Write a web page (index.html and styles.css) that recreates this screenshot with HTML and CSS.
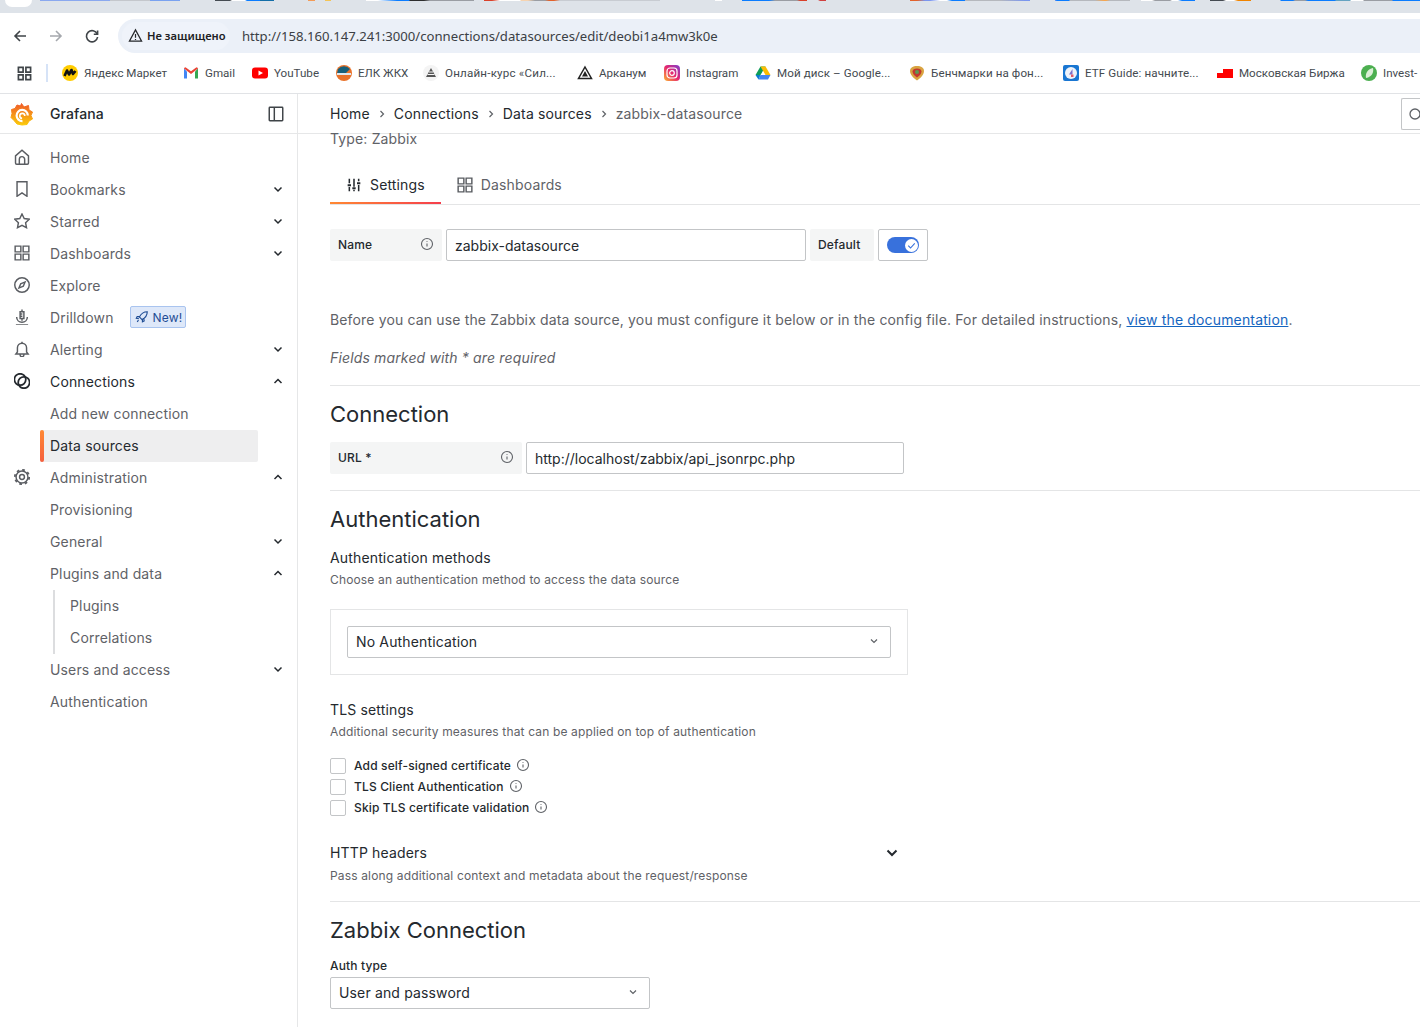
FILE: index.html
```html
<!DOCTYPE html>
<html lang="en">
<head>
<meta charset="utf-8">
<title>zabbix-datasource - Grafana</title>
<link rel="stylesheet" href="styles.css">
</head>
<body>
<div class="tabstrip"><span class="tab-stub"></span></div>
<div class="toolbar">
  <svg class="nav-ic" viewBox="0 0 16 16"><path d="M14 8H3M8 3L3 8l5 5"/></svg>
  <svg class="nav-ic nav-off" viewBox="0 0 16 16"><path d="M2 8h11M8 3l5 5-5 5"/></svg>
  <svg class="nav-ic" viewBox="0 0 16 16"><path d="M13.2 6A5.6 5.6 0 1 0 13.6 9"/><path d="M13.6 2.400V6.200H9.800"/></svg>
  <div class="omnibox">
    <div class="chip">
      <svg class="warn" viewBox="0 0 16 16"><path d="M8 2L1.500 14h13z"/><path d="M8 6.500v4M8 11.600v1.200"/></svg>
      <span>Не защищено</span>
    </div>
    <span class="url">http://158.160.147.241:3000/connections/datasources/edit/deobi1a4mw3k0e</span>
  </div>
</div>
<div class="bookmarks">
  <svg class="bm-apps" viewBox="0 0 16 16"><path d="M1.500 1.500h5v5h-5zM9.500 1.500h5v5h-5zM1.500 9.500h5v5h-5zM9.500 9.500h5v5h-5z"/></svg>
  <span class="bm-sep"></span>
  <div class="bm">
    <svg viewBox="0 0 16 16"><circle cx="8" cy="8" r="8" fill="#fc0"/><path d="M2.500 11L5 5.500 7 9.500 9.500 5 11 9l2.500-3" fill="none" stroke="#111" stroke-width="2.600" stroke-linejoin="round"/></svg>
    <span class="bm-t w-yandex">Яндекс Маркет</span>
  </div>
  <div class="bm">
    <svg viewBox="0 0 16 16"><path d="M1 3.500v10h3V6.500z" fill="#4285f4"/><path d="M15 3.500v10h-3V6.500z" fill="#34a853"/><path d="M1 3.500L8 9l7-5.500V3l-1.500-.8L8 6.200 2.500 2.200 1 3z" fill="#ea4335"/></svg>
    <span class="bm-t w-gmail">Gmail</span>
  </div>
  <div class="bm">
    <svg viewBox="0 0 16 16"><rect y="2.500" width="16" height="11" rx="3" fill="#f00"/><path d="M6.500 5.500L11 8l-4.500 2.500z" fill="#fff"/></svg>
    <span class="bm-t w-yt">YouTube</span>
  </div>
  <div class="bm">
    <svg viewBox="0 0 16 16"><circle cx="8" cy="8" r="8" fill="#e9722a"/><path d="M2 4a8 8 0 0 1 12 0L9 9H1z" fill="#17607a"/><path d="M1 9h14" stroke="#dfe8ee" stroke-width="2"/></svg>
    <span class="bm-t w-elk">ЕЛК ЖКХ</span>
  </div>
  <div class="bm gap-21">
    <svg viewBox="0 0 16 16"><circle cx="8" cy="8" r="8" fill="#f4f4f4"/><path d="M8 3l5 9H3z" fill="#555"/><path d="M4.500 9.500h7M6 7h4" stroke="#f4f4f4"/></svg>
    <span class="bm-t w-trunc">Онлайн-курс «Сил...</span>
  </div>
  <div class="bm gap-17">
    <svg viewBox="0 0 16 16"><path d="M8 2l6.500 11.500h-13z" fill="none" stroke="#222" stroke-width="1.500"/><path d="M8 6l3 5.500H5z" fill="#222"/></svg>
    <span class="bm-t w-ark">Арканум</span>
  </div>
  <div class="bm">
    <svg viewBox="0 0 16 16"><defs><linearGradient id="ig" x1="0" y1="1" x2="1" y2="0"><stop offset="0" stop-color="#fdb52e"/><stop offset=".5" stop-color="#e6276f"/><stop offset="1" stop-color="#7a3fd0"/></linearGradient></defs><rect width="16" height="16" rx="4" fill="url(#ig)"/><rect x="3" y="3" width="10" height="10" rx="3" fill="none" stroke="#fff" stroke-width="1.200"/><circle cx="8" cy="8" r="2.300" fill="none" stroke="#fff" stroke-width="1.200"/></svg>
    <span class="bm-t w-insta">Instagram</span>
  </div>
  <div class="bm gap-19">
    <svg viewBox="0 0 16 16"><path d="M5.500 1.500h5L5.500 10H.5z" fill="#0f9d58"/><path d="M10.500 1.500L15.500 10h-5L5.500 1.500z" fill="#fbbc04"/><path d="M3.500 14.500L5.500 10h10l-2.500 4.500z" fill="#4285f4"/><path d="M.5 10h5l-2 4.500z" fill="#0a7bd0"/></svg>
    <span class="bm-t w-trunc-b">Мой диск – Google...</span>
  </div>
  <div class="bm gap-20">
    <svg viewBox="0 0 16 16"><path d="M8 1C12 1 15 2.500 15 6c0 4-3.500 7-7 9.500C4.500 13 1 10 1 6 1 2.500 4 1 8 1z" fill="#d9a441"/><path d="M8 3.500c2.500 0 4.500 1 4.500 3 0 2.500-2.500 4.500-4.500 6-2-1.500-4.500-3.500-4.500-6 0-2 2-3 4.500-3z" fill="#c2382f"/><circle cx="8" cy="7" r="2" fill="#5d9b52"/></svg>
    <span class="bm-t w-trunc-c">Бенчмарки на фон...</span>
  </div>
  <div class="bm gap-20">
    <svg viewBox="0 0 16 16"><rect width="16" height="16" rx="2" fill="#1976d2"/><circle cx="8" cy="8" r="6" fill="#eef3fa"/><path d="M9.500 4L6 9.500h3.500z" fill="#7d6fc9"/><path d="M8 9.500h2.500V12H8z" fill="#e05a6a"/></svg>
    <span class="bm-t w-trunc-c">ETF Guide: начните...</span>
  </div>
  <div class="bm">
    <svg viewBox="0 0 16 16"><path d="M0 13V8h6V4h10v9z" fill="#f00"/></svg>
    <span class="bm-t w-moex">Московская Биржа</span>
  </div>
  <div class="bm">
    <svg viewBox="0 0 16 16"><circle cx="8" cy="8" r="8" fill="#4caf50"/><path d="M5 13C4 8 7 4 12 3c1 4-1 9-7 10z" fill="#dcefd8"/></svg>
    <span class="bm-t">Invest-</span>
  </div>
</div>

<div class="app">
  <aside class="sidebar">
    <div class="side-head">
      <svg class="logo" viewBox="0 0 24 24"><defs><linearGradient id="gf" x1="0" y1="1" x2="0" y2="0"><stop offset="0" stop-color="#fbca0a"/><stop offset="1" stop-color="#f05a28"/></linearGradient></defs><path d="M11.500 1.500L14 5l4.500-1.500.5 4.500 3.500 2-1.500 3.500 1.500 3.500-3.500 2-2 3.500-5 .5-5-1-3-3.500-3-3 1-4-.5-4 3.500-1L7 3l3.500 1z" fill="url(#gf)" stroke="url(#gf)" stroke-linejoin="round"/><path d="M17.800 13.500a5.600 5.600 0 1 0-5.300 5.600" fill="none" stroke="#fff" stroke-width="2.200"/><path d="M14.800 14a2.500 2.500 0 1 0-2.700 2.400" fill="none" stroke="#fff" stroke-width="1.600"/></svg>
      <span class="brand">Grafana</span>
      <svg class="dock" viewBox="0 0 16 16"><rect x="2" y="2" width="12" height="12" rx=".6"/><path d="M6.500 2v12"/></svg>
    </div>
    <nav class="nav">
      <a class="row"><svg class="ic" viewBox="1.500 1.500 21 21"><path d="M3.500 10.500L12 3l8.500 7.500V20a1.500 1.500 0 0 1-1.500 1.500H5A1.500 1.500 0 0 1 3.500 20z"/><path d="M8.500 21.500V15a3.500 3.500 0 0 1 7 0v6.500"/></svg><span>Home</span></a>
      <a class="row"><svg class="ic" viewBox="1.500 1.500 21 21"><path d="M5.500 2.500h13v19L12 17l-6.500 4.500z"/></svg><span>Bookmarks</span><svg class="chev" viewBox="0 0 16 16"><path d="M4.500 6.500L8 10l3.500-3.500"/></svg></a>
      <a class="row"><svg class="ic" viewBox="1.500 1.500 21 21"><path d="M12 2.800l2.900 6 6.600.9-4.800 4.600 1.200 6.500L12 17.700l-5.900 3.100 1.200-6.500-4.800-4.600 6.600-.9z"/></svg><span>Starred</span><svg class="chev" viewBox="0 0 16 16"><path d="M4.500 6.500L8 10l3.500-3.500"/></svg></a>
      <a class="row"><svg class="ic" viewBox="1.500 1.500 21 21"><path d="M3 3h7.500v7.500H3zM13.500 3H21v7.500h-7.500zM3 13.500h7.500V21H3zM13.500 13.500H21V21h-7.500z"/></svg><span>Dashboards</span><svg class="chev" viewBox="0 0 16 16"><path d="M4.500 6.500L8 10l3.500-3.500"/></svg></a>
      <a class="row"><svg class="ic" viewBox="1.500 1.500 21 21"><circle cx="12" cy="12" r="9.500"/><path d="M16 8l-2.300 5.700L8 16l2.300-5.700z"/></svg><span>Explore</span></a>
      <a class="row"><svg class="ic" viewBox="1.500 1.500 21 21"><path d="M12 2v3M9.500 5h5v9h-5zM9.500 8h3M9.500 11h3M12 14v3"/><path d="M5 12c0 4 3 7 7 7s7-3 7-7"/><path d="M4 22.500h16"/></svg><span>Drilldown</span>
        <span class="badge"><svg class="rocket" viewBox="0 0 16 16"><path d="M14 2c-4 0-7 2-9 6l3 3c4-2 6-5 6-9z"/><path d="M5.500 7.500H2.500l-1 2 3 .5M8.500 10.500v3l2-1-.5-3M4 11.500L2.500 13.500"/></svg>New!</span></a>
      <a class="row"><svg class="ic" viewBox="1.500 1.500 21 21"><path d="M6 16V10.500a6 6 0 0 1 12 0V16l2 2.500H4z"/><path d="M9.500 18.500v1a2.500 2.500 0 0 0 5 0v-1M12 2.500v2"/></svg><span>Alerting</span><svg class="chev" viewBox="0 0 16 16"><path d="M4.500 6.500L8 10l3.500-3.500"/></svg></a>
      <a class="row row-on"><svg class="ic ic-on" viewBox="1.500 1.500 21 21"><circle cx="9.500" cy="10" r="7.500"/><circle cx="14.500" cy="14" r="7.500"/></svg><span>Connections</span><svg class="chev" viewBox="0 0 16 16"><path d="M4.500 10L8 6.500l3.500 3.500"/></svg></a>
      <a class="row row-sub"><span>Add new connection</span></a>
      <a class="row row-sub row-active"><span>Data sources</span></a>
      <a class="row"><svg class="ic" viewBox="1.500 1.500 21 21"><circle cx="12" cy="12" r="3.200"/><circle cx="12" cy="12" r="7.800"/><circle class="teeth" cx="12" cy="12" r="9.400"/></svg><span>Administration</span><svg class="chev" viewBox="0 0 16 16"><path d="M4.500 10L8 6.500l3.500 3.500"/></svg></a>
      <a class="row row-sub"><span>Provisioning</span></a>
      <a class="row row-sub"><span>General</span><svg class="chev" viewBox="0 0 16 16"><path d="M4.500 6.500L8 10l3.500-3.500"/></svg></a>
      <a class="row row-sub"><span>Plugins and data</span><svg class="chev" viewBox="0 0 16 16"><path d="M4.500 10L8 6.500l3.500 3.500"/></svg></a>
      <div class="subtree">
        <a class="row row-leaf"><span>Plugins</span></a>
        <a class="row row-leaf"><span>Correlations</span></a>
      </div>
      <a class="row row-sub"><span>Users and access</span><svg class="chev" viewBox="0 0 16 16"><path d="M4.500 6.500L8 10l3.500-3.500"/></svg></a>
      <a class="row row-sub"><span>Authentication</span></a>
    </nav>
  </aside>

  <div class="main">
    <header class="crumbs">
      <span class="crumb">Home</span><svg class="sep" viewBox="0 0 10 16"><path d="M3.500 5L6.500 8l-3 3"/></svg>
      <span class="crumb">Connections</span><svg class="sep" viewBox="0 0 10 16"><path d="M3.500 5L6.500 8l-3 3"/></svg>
      <span class="crumb">Data sources</span><svg class="sep" viewBox="0 0 10 16"><path d="M3.500 5L6.500 8l-3 3"/></svg>
      <span class="crumb crumb-last">zabbix-datasource</span>
      <div class="searchbox"><svg viewBox="0 0 16 16"><circle cx="11" cy="8" r="5"/></svg></div>
    </header>
    <div class="content">
      <div class="type-line">Type: Zabbix</div>
      <div class="tabs">
        <div class="tab tab-on"><svg class="ic ic-on" viewBox="0 0 24 24"><path d="M5 2.500v7M5 15v6.500M12 2.500v12M12 19v2.500M19 2.500v4M19 12v9.500"/><path d="M2.500 12.500h5M9.500 17h5M16.500 9.500h5" stroke-width="3"/></svg><span>Settings</span></div>
        <div class="tab"><svg class="ic" viewBox="1.500 1.500 21 21"><path d="M3 3h7.500v7.500H3zM13.500 3H21v7.500h-7.500zM3 13.500h7.500V21H3zM13.500 13.500H21V21h-7.500z"/></svg><span>Dashboards</span></div>
      </div>

      <div class="inline-row first-row">
        <div class="label label-name">Name<svg class="info" viewBox="0 0 16 16"><circle cx="8" cy="8" r="5.500"/><path d="M8 7.500v3M8 5.200v.8"/></svg></div>
        <div class="input input-name">zabbix-datasource</div>
        <div class="label label-default">Default</div>
        <div class="switch-box"><span class="switch"><span class="knob"><svg viewBox="0 0 12 12"><path d="M3 6.200l2.100 2.100L9 4"/></svg></span></span></div>
      </div>

      <p class="intro">Before you can use the Zabbix data source, you must configure it below or in the config file. For detailed instructions, <a class="link">view the documentation</a>.</p>
      <p class="required">Fields marked with * are required</p>
      <hr class="rule rule-a">

      <h3 class="h">Connection</h3>
      <div class="inline-row url-row">
        <div class="label label-url">URL *<svg class="info" viewBox="0 0 16 16"><circle cx="8" cy="8" r="5.500"/><path d="M8 7.500v3M8 5.200v.8"/></svg></div>
        <div class="input input-url">http://localhost/zabbix/api_jsonrpc.php</div>
      </div>
      <hr class="rule rule-b">

      <h3 class="h">Authentication</h3>
      <div class="sub-title sub-auth">Authentication methods</div>
      <div class="desc">Choose an authentication method to access the data source</div>
      <div class="auth-box">
        <div class="select select-auth">No Authentication<svg class="sel-chev" viewBox="0 0 16 16"><path d="M5 6.500L8 9.500l3-3"/></svg></div>
      </div>
      <div class="sub-title sub-tls">TLS settings</div>
      <div class="desc">Additional security measures that can be applied on top of authentication</div>
      <div class="checks">
        <label class="check"><span class="box"></span><span class="check-t">Add self-signed certificate</span><svg class="info" viewBox="0 0 16 16"><circle cx="8" cy="8" r="5.500"/><path d="M8 7.500v3M8 5.200v.8"/></svg></label>
        <label class="check"><span class="box"></span><span class="check-t">TLS Client Authentication</span><svg class="info" viewBox="0 0 16 16"><circle cx="8" cy="8" r="5.500"/><path d="M8 7.500v3M8 5.200v.8"/></svg></label>
        <label class="check"><span class="box"></span><span class="check-t">Skip TLS certificate validation</span><svg class="info" viewBox="0 0 16 16"><circle cx="8" cy="8" r="5.500"/><path d="M8 7.500v3M8 5.200v.8"/></svg></label>
      </div>
      <div class="sub-title http-row">HTTP headers<svg class="http-chev" viewBox="0 0 16 16"><path d="M3.500 5.500L8 10l4.500-4.500"/></svg></div>
      <div class="desc desc-http">Pass along additional context and metadata about the request/response</div>
      <hr class="rule rule-c">

      <h3 class="h">Zabbix Connection</h3>
      <div class="field-label">Auth type</div>
      <div class="select select-type">User and password<svg class="sel-chev" viewBox="0 0 16 16"><path d="M5 6.500L8 9.500l3-3"/></svg></div>
    </div>
  </div>
</div>
</body>
</html>
```

FILE: styles.css
```css
* { box-sizing: border-box; }
html, body { margin: 0; padding: 0; }
body {
  width: 1420px;
  height: 1027px;
  overflow: hidden;
  background: #fff;
  font-family: Inter, "Liberation Sans", sans-serif;
  font-size: 14px;
  letter-spacing: .15px;
  color: #24292e;
}
svg { display: block; flex: none; }

/* browser chrome */
.tabstrip {
  height: 13px;
  background-color: #dee3e9;
  background-image: linear-gradient(90deg,
    #dee3e9 0 40px, #8aa8ef 40px 110px, #c4c7cc 110px 150px, #7aa2f0 150px 180px, #dee3e9 180px 215px,
    #454b52 215px 230px, #fff 232px 245px, #0a7cff 247px 260px, #136ea8 260px 274px, #dee3e9 274px 308px,
    #f39b57 308px 315px, #dee3e9 315px 325px, #f4c455 325px 331px, #dee3e9 331px 366px, #fff 366px 378px,
    #0a7cff 397px 409px, #2e2e2e 410px 424px, #9a9da3 430px 474px, #dee3e9 474px 484px, #d9402a 484px 492px,
    #fff 500px 520px, #f6d3b0 521px 528px, #9a9da3 535px 545px, #e2622c 549px 554px, #c8ccd2 560px 660px,
    #dee3e9 660px 715px, #fff 715px 722px, #dee3e9 722px 742px, #0a7cff 742px 755px, #0a7cff 757px 769px,
    #9a9da3 775px 797px, #d9402a 800px 807px, #dee3e9 807px 818px, #d04040 820px 826px, #dee3e9 826px 910px,
    #e2622c 910px 917px, #7a96f0 925px 930px, #fff 940px 947px, #0a7cff 952px 965px, #b5b8bd 965px 1000px,
    #7a96f0 1025px 1030px, #dee3e9 1030px 1055px, #7a96f0 1030px 1035px, #0a7cff 1057px 1069px, #b5b8bd 1070px 1095px,
    #f6a64f 1104px 1106px, #b5b8bd 1110px 1130px, #dee3e9 1130px 1141px, #fff 1141px 1152px, #9a9da3 1155px 1170px,
    #fff 1172px 1178px, #0a7cff 1182px 1195px, #dee3e9 1195px 1210px, #454b52 1210px 1223px, #fff 1226px 1234px,
    #f08400 1238px 1251px, #dee3e9 1251px 1280px, #0a7cff 1281px 1293px, #9a9da3 1295px 1305px, #0a7cff 1308px 1320px,
    #0a7cff 1322px 1335px, #65a3c0 1336px 1350px, #fff 1351px 1363px, #9a9da3 1364px 1392px, #0a7cff 1393px 1405px,
    #0a7cff 1407px 1420px);
  background-size: 100% 1px;
  background-repeat: no-repeat;
}
.tab-stub {
  display: block;
  width: 27px;
  height: 7px;
  margin-left: 5px;
  background: #fff;
  border-radius: 0 0 10px 10px;
}
.toolbar {
  height: 46px;
  background: #fff;
  display: flex;
  align-items: center;
  padding: 0 0 0 12px;
  gap: 20px;
  border-radius: 6px 0 0 0;
  letter-spacing: 0;
}
.nav-ic {
  width: 16px;
  height: 16px;
  fill: none;
  stroke: #3f4448;
  stroke-width: 1.600;
}
.nav-off { stroke: #a5a8ad; }
.omnibox {
  flex: 1;
  height: 34px;
  margin-left: -2px;
  background: #ebf0f8;
  border-radius: 17px 0 0 17px;
  display: flex;
  align-items: center;
  padding-left: 4px;
}
.chip {
  width: 108px;
  height: 28px;
  border-radius: 14px;
  background: #eff3fa;
  display: flex;
  align-items: center;
  gap: 4px;
  padding: 0 0 2px 6px;
  font-family: "Noto Sans", Roboto, sans-serif;
  font-size: 11.200px;
  font-weight: 600;
  color: #202124;
  white-space: nowrap;
}
.warn { width: 15px; height: 15px; fill: none; stroke: #26282b; stroke-width: 1.300; }
.url {
  margin-left: 12px;
  font-family: "Noto Sans", Roboto, sans-serif;
  font-size: 13.150px;
  color: #3b4045;
  white-space: nowrap;
}
.bookmarks {
  height: 35px;
  background: #fff;
  border-bottom: 1px solid #e1e3e6;
  display: flex;
  align-items: center;
  padding: 0 0 6px 17px;
  overflow: hidden;
  white-space: nowrap;
  letter-spacing: 0;
}
.bm-apps { width: 15px; height: 15px; fill: none; stroke: #3f4448; stroke-width: 1.800; }
.bm-sep { flex: none; width: 2px; height: 18px; background: #d6e3f7; margin: 0 14px; }
.bm {
  display: flex;
  align-items: center;
  gap: 6px;
  margin-right: 16px;
  font-family: Roboto, "Noto Sans", sans-serif;
  font-size: 11.600px;
  color: #444a50;
  flex: none;
}
.bm svg { width: 16px; height: 16px; }
.bm-t { display: block; white-space: nowrap; }
.gap-17 { margin-right: 17px; }
.gap-19 { margin-right: 19px; }
.gap-20 { margin-right: 20px; }
.gap-21 { margin-right: 21px; }
.w-yandex { width: 83px; }
.w-gmail { width: 31px; }
.w-yt { width: 46px; }
.w-elk { width: 49px; }
.w-trunc { width: 111px; letter-spacing: .2px; }
.w-ark { width: 48px; }
.w-insta { width: 53px; }
.w-trunc-b { width: 113px; letter-spacing: .1px; }
.w-trunc-c { width: 112px; letter-spacing: .1px; }
.w-moex { width: 106px; }

/* app */
.app { display: flex; height: 933px; }
.sidebar {
  width: 298px;
  flex: none;
  border-right: 1px solid #e6e7e8;
  display: flex;
  flex-direction: column;
}
.side-head {
  height: 40px;
  border-bottom: 1px solid #e6e7e8;
  display: flex;
  align-items: center;
  padding: 0 12px 0 10px;
}
.logo { width: 24px; height: 24px; }
.brand { margin-left: 16px; font-size: 14px; font-weight: 500; letter-spacing: .1px; }
.dock {
  margin-left: auto;
  width: 18px;
  height: 18px;
  fill: none;
  stroke: #3f4448;
  stroke-width: 1.300;
}
.nav { padding-top: 8px; display: flex; flex-direction: column; }
.row {
  height: 32px;
  display: flex;
  align-items: center;
  gap: 20px;
  padding: 0 11px 2px 14px;
  color: #5f6267;
  position: relative;
}
.ic {
  width: 16px;
  height: 16px;
  fill: none;
  stroke: #5a5d62;
  stroke-width: 1.900;
}
.ic-on { stroke: #24292e; stroke-width: 2.300; }
.row-on { color: #24292e; }
.teeth { stroke-dasharray: 3.500 3.880; stroke-width: 2.400; }
.chev {
  width: 16px;
  height: 16px;
  margin-left: auto;
  fill: none;
  stroke: #24292e;
  stroke-width: 1.500;
}
.row-sub { padding-left: 50px; }
.row-leaf { padding-left: 15px; }
.row-active {
  margin: 0 39px 0 40px;
  padding-left: 10px;
  background: #eeeeef;
  border-radius: 2px;
  color: #24292e;
}
.row-active::before {
  content: "";
  position: absolute;
  left: 0;
  top: 0;
  bottom: 0;
  width: 4px;
  border-radius: 2px;
  background: linear-gradient(0deg, #f55f3e, #ff8833);
}
.subtree {
  margin-left: 53px;
  border-left: 2px solid #dcdddf;
}
.badge {
  display: flex;
  align-items: center;
  gap: 4px;
  height: 22px;
  padding: 0 3px 0 4px;
  margin-left: -4px;
  background: #dee8f9;
  border: 1px solid #a9c4ef;
  border-radius: 2px;
  color: #1f4d95;
  font-size: 12px;
}
.rocket { width: 14px; height: 14px; fill: none; stroke: #1f4d95; stroke-width: 1.300; }

/* main */
.main { flex: 1; min-width: 0; overflow: hidden; display: flex; flex-direction: column; }
.crumbs {
  height: 40px;
  flex: none;
  border-bottom: 1px solid #e6e7e8;
  display: flex;
  align-items: center;
  padding-left: 32px;
  white-space: nowrap;
}
.crumb-last { color: #5f6267; }
.sep {
  width: 10px;
  height: 16px;
  margin: 0 7px 0 7px;
  fill: none;
  stroke: #5f6267;
  stroke-width: 1.200;
}
.searchbox {
  margin-left: auto;
  width: 19px;
  height: 32px;
  border: 1px solid #c3c5c7;
  border-right: 0;
  border-radius: 2px 0 0 2px;
  display: flex;
  align-items: center;
  overflow: hidden;
}
.searchbox svg { width: 16px; height: 16px; margin-left: 2px; fill: none; stroke: #5f6267; stroke-width: 1.300; }
.content { padding-left: 32px; }
.type-line { height: 12px; line-height: 12px; margin-top: -1px; color: #5f6267; }
.tabs {
  margin-top: 22px;
  height: 38px;
  display: flex;
  border-bottom: 1px solid #e4e5e6;
}
.tab {
  height: 37px;
  padding: 0 16px 2px;
  display: flex;
  align-items: center;
  gap: 8px;
  color: #5f6267;
  position: relative;
}
.tab-on { color: #24292e; }
.tab-on::after {
  content: "";
  position: absolute;
  left: 0;
  right: 0;
  bottom: 0;
  height: 2px;
  background: linear-gradient(90deg, #ff8833, #f53e4c);
}
.inline-row { display: flex; gap: 4px; }
.first-row { margin-top: 24px; }
.label {
  height: 32px;
  background: #f4f5f5;
  border-radius: 2px;
  display: flex;
  align-items: center;
  padding: 0 8px 2px;
  font-size: 12px;
  font-weight: 500;
}
.label .info { margin-left: auto; margin-right: -1px; }
.label-name { width: 112px; }
.label-default { width: 64px; }
.label-url { width: 192px; }
.info { width: 16px; height: 16px; fill: none; stroke: #5f6267; stroke-width: 1.100; }
.input {
  height: 32px;
  border: 1px solid #c3c5c7;
  border-radius: 2px;
  padding: 0 8px;
  display: flex;
  align-items: center;
  letter-spacing: 0;
}
.input-name { width: 360px; }
.input-url { width: 378px; }
.switch-box {
  width: 50px;
  height: 32px;
  border: 1px solid #c3c5c7;
  border-radius: 2px;
  display: flex;
  align-items: center;
  justify-content: center;
}
.switch {
  width: 32px;
  height: 16px;
  border-radius: 8px;
  background: #3871dc;
  display: flex;
  justify-content: flex-end;
  align-items: center;
  padding-right: 1px;
}
.knob {
  width: 13px;
  height: 13px;
  border-radius: 50%;
  background: #fff;
}
.knob svg { width: 13px; height: 13px; fill: none; stroke: #3871dc; stroke-width: 1; }
.intro { margin: 49px 0 0; line-height: 20px; color: #5f6267; white-space: nowrap; }
.link { color: #1565c0; text-decoration: underline; }
.required { margin: 18px 0 0; line-height: 20px; color: #5f6267; font-style: italic; }
.rule { border: 0; height: 1px; background: #e4e5e6; margin: 0; }
.rule-a { margin-top: 17px; }
.rule-b { margin-top: 16px; }
.rule-c { margin-top: 17px; }
.h { margin: 14px 0 0; font-size: 22px; line-height: 28px; font-weight: 400; letter-spacing: 0; }
.url-row { margin-top: 14px; }
.sub-title { line-height: 20px; }
.sub-auth { margin-top: 15px; }
.desc { margin-top: 4px; font-size: 12px; line-height: 16px; color: #5f6267; }
.auth-box {
  margin-top: 21px;
  width: 578px;
  height: 66px;
  border: 1px solid #e4e5e6;
  padding: 16px;
}
.select {
  height: 32px;
  border: 1px solid #c3c5c7;
  border-radius: 2px;
  padding: 0 8px 2px;
  display: flex;
  align-items: center;
}
.sel-chev { width: 16px; height: 16px; margin-left: auto; fill: none; stroke: #5f6267; stroke-width: 1.200; }
.sub-tls { margin-top: 25px; }
.checks { margin-top: 18px; display: flex; flex-direction: column; gap: 5px; }
.check { height: 16px; display: flex; align-items: center; font-size: 12px; font-weight: 500; }
.check-t { padding-bottom: 2px; }
.box {
  width: 16px;
  height: 16px;
  border: 1px solid #c3c5c7;
  border-radius: 2px;
  margin-right: 8px;
}
.check .info { margin-left: 4px; margin-top: -3px; }
.http-row { margin-top: 27px; width: 570px; display: flex; align-items: center; justify-content: space-between; }
.http-chev { width: 16px; height: 16px; fill: none; stroke: #24292e; stroke-width: 2; }
.desc-http { margin-top: 5px; }
.field-label { margin-top: 14px; font-size: 12px; font-weight: 500; line-height: 16px; }
.select-type { margin-top: 3px; width: 320px; }
```
